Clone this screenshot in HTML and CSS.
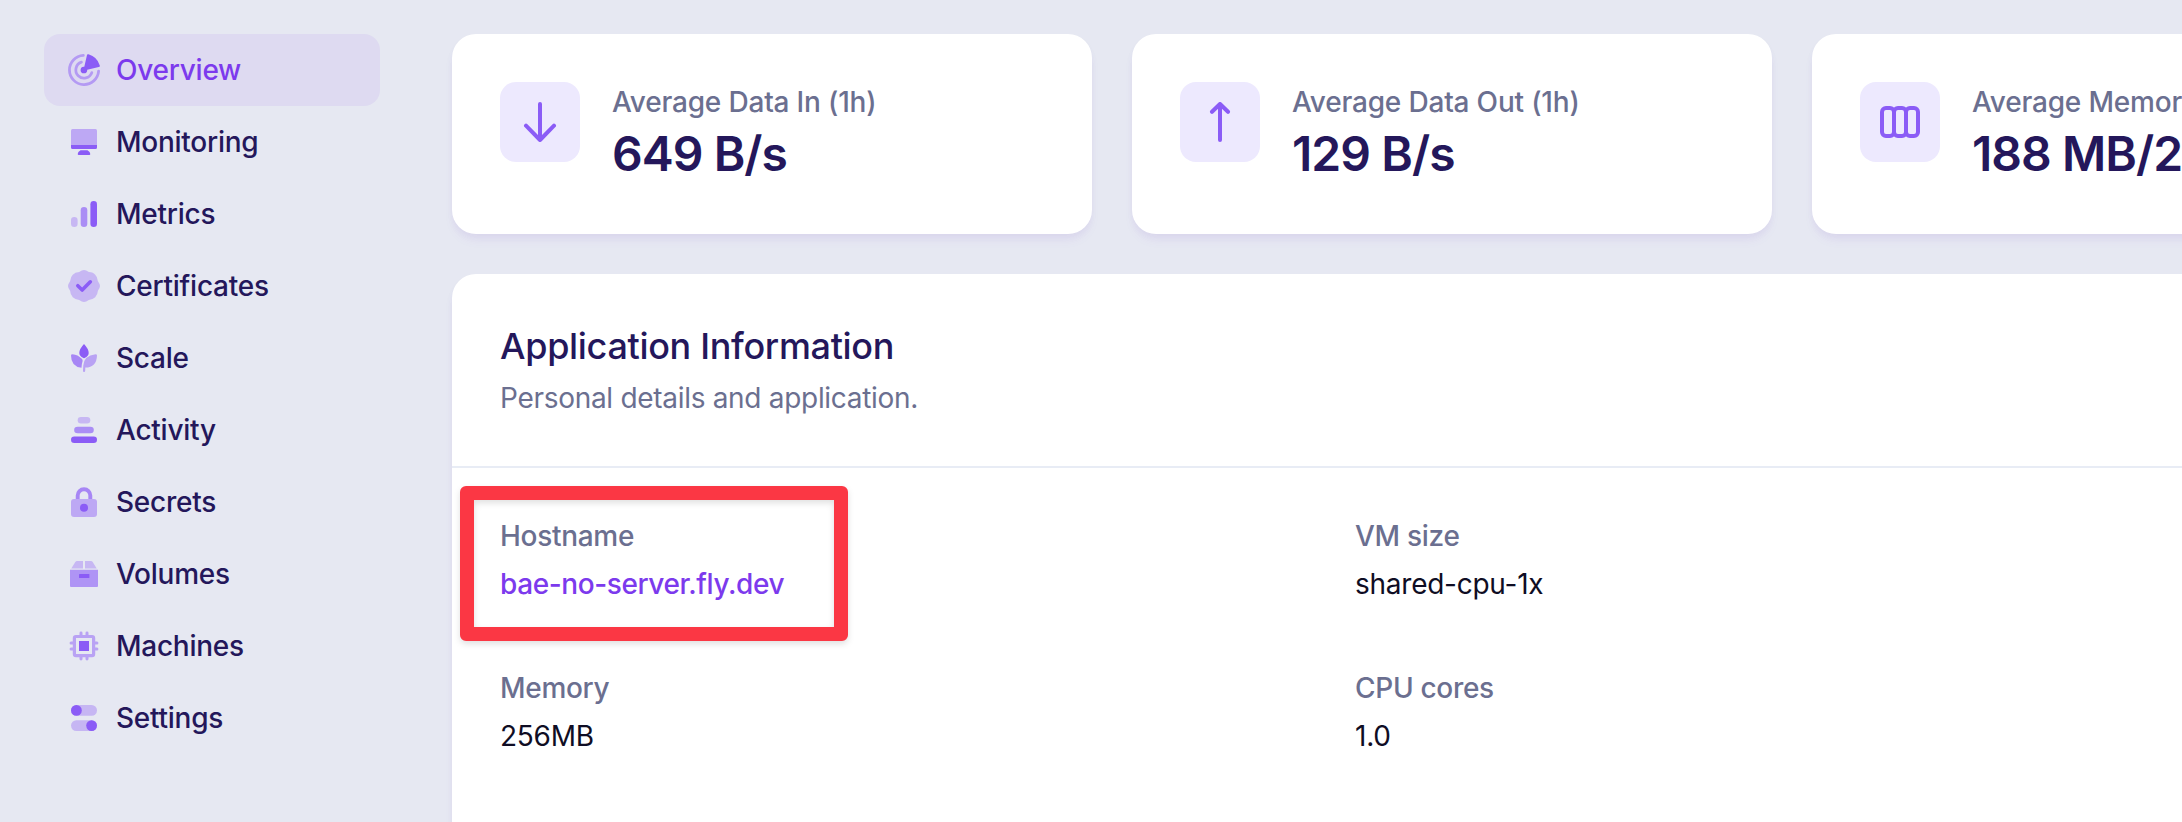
FILE: index.html
```html
<!DOCTYPE html>
<html lang="en">
<head>
<meta charset="utf-8">
<title>Application overview</title>
<link rel="stylesheet" href="styles.css">
</head>
<body>
<div class="layout">
  <nav class="sidebar">
    <a class="nav-item active">
      <svg class="icon" viewBox="0 0 32 32"><g fill="none" stroke="#8b5cf6" stroke-width="2.8" stroke-linecap="round" opacity=".5"><path d="M15.300 1.400A14.600 14.600 0 1 0 30.600 17.200"/><path d="M13.400 8.200A8.200 8.200 0 1 0 23.800 18.600"/></g><path d="M19 1.100Q19.200 -.1 20.500 .3A16.500 16.500 0 0 1 31.800 11.500Q32.100 12.800 30.800 13L19.200 15.800A3.300 3.300 0 1 1 16.300 12.700Z" fill="#8b5cf6"/></svg>
      <span>Overview</span>
    </a>
    <a class="nav-item">
      <svg class="icon" viewBox="0 0 32 32"><path d="M3 19V4.5Q3 3 4.5 3h23Q29 3 29 4.500V19Z" fill="#8b5cf6" opacity=".45"/><path d="M3 19H29V21.500Q29 23 27.500 23H4.500Q3 23 3 21.500ZM12.500 24.300H19.500Q22.300 26 22.300 28Q22.300 29 21.300 29H10.700Q9.700 29 9.700 28Q9.700 26 12.500 24.300Z" fill="#8b5cf6"/></svg>
      <span>Monitoring</span>
    </a>
    <a class="nav-item">
      <svg class="icon" viewBox="0 0 32 32" fill="#8b5cf6"><rect x="3" y="19" width="6.600" height="10" rx="3.300" opacity=".35"/><rect x="12.700" y="9" width="6.600" height="20" rx="3.300" opacity=".65"/><rect x="22.400" y="3" width="6.600" height="26" rx="3.300"/></svg>
      <span>Metrics</span>
    </a>
    <a class="nav-item">
      <svg class="icon" viewBox="0 0 32 32"><path d="M16 0Q18 0 20.800 2Q25.500 2.300 27.200 4.800Q29.600 7 29.900 11.200Q32 14 32 16Q32 18 29.900 20.800Q29.600 25 27.200 27.200Q25 29.600 20.800 29.900Q18 32 16 32Q14 32 11.200 29.900Q7 29.600 4.800 27.200Q2.400 25 2.100 20.800Q0 18 0 16Q0 14 2.100 11.200Q2.400 7 4.800 4.800Q7 2.400 11.200 2.100Q14 0 16 0Z" fill="#8b5cf6" opacity=".35"/><path d="M9.800 15.700L14.200 20L22.300 11.800" fill="none" stroke="#8b5cf6" stroke-width="3.600" stroke-linecap="round" stroke-linejoin="round"/></svg>
      <span>Certificates</span>
    </a>
    <a class="nav-item">
      <svg class="icon" viewBox="0 0 32 32" fill="#8b5cf6"><path d="M16 2Q20.700 7 20.700 11Q20.700 14 16.600 16Q16 16.300 15.400 16Q11.300 14 11.300 11Q11.300 7 16 2Z"/><path d="M3 13.500Q3 12.200 4.500 12.200Q9.800 12.500 13.800 16.800Q14.800 17.800 14.600 19Q13.600 22 13.500 25.800Q3 24.500 3 13.500Z" opacity=".7"/><path d="M29 13.500Q29 12.200 27.500 12.200Q16 13.500 15.300 23.500L15 29Q15 30 16 30Q17.200 30 17.200 28.500L17.300 25.600Q28.500 25.500 29 13.500Z" opacity=".5"/></svg>
      <span>Scale</span>
    </a>
    <a class="nav-item">
      <svg class="icon" viewBox="0 0 32 32" fill="#8b5cf6"><rect x="9.700" y="3" width="12.600" height="6.600" rx="3.300" opacity=".35"/><rect x="6.200" y="12.700" width="19.600" height="6.600" rx="3.300" opacity=".65"/><rect x="3" y="22.400" width="26" height="6.600" rx="3.300"/></svg>
      <span>Activity</span>
    </a>
    <a class="nav-item">
      <svg class="icon" viewBox="0 0 32 32"><path d="M9.700 13V9.500A6.300 6.300 0 0 1 22.300 9.500V13" fill="none" stroke="#8b5cf6" stroke-width="3.900" opacity=".7"/><rect x="3" y="13" width="26" height="18" rx="3" fill="#8b5cf6" opacity=".45"/><circle cx="16" cy="21.800" r="4" fill="#8b5cf6"/></svg>
      <span>Secrets</span>
    </a>
    <a class="nav-item">
      <svg class="icon" viewBox="0 0 32 32" fill="#8b5cf6"><path d="M9 3H15V10.400H3.300L7.300 3.900Q7.900 3 9 3ZM17 3H23Q24.100 3 24.700 3.900L28.700 10.400H17Z" opacity=".35"/><path d="M2 11.700H30V28Q30 29 29 29H3Q2 29 2 28Z" opacity=".6"/><rect x="11" y="16" width="10.400" height="4" rx=".5"/></svg>
      <span>Volumes</span>
    </a>
    <a class="nav-item">
      <svg class="icon" viewBox="0 0 32 32"><g opacity=".5"><path d="M8 5H11.500V3Q11.500 1.600 13 1.600Q14.500 1.600 14.500 3V5H17.500V3Q17.500 1.600 19 1.600Q20.500 1.600 20.500 3V5H24Q27.200 5 27.200 8V11.500H29Q30.400 11.500 30.400 13Q30.400 14.500 29 14.500H27.200V17.500H29Q30.400 17.500 30.400 19Q30.400 20.500 29 20.500H27.200V24Q27.200 27.200 24 27.200H20.500V29Q20.500 30.400 19 30.400Q17.500 30.400 17.500 29V27.200H14.500V29Q14.500 30.400 13 30.400Q11.500 30.400 11.500 29V27.200H8Q4.800 27.200 4.800 24V20.500H3Q1.600 20.500 1.600 19Q1.600 17.500 3 17.500H4.800V14.500H3Q1.600 14.500 1.600 13Q1.600 11.500 3 11.500H4.800V8Q4.800 5 8 5ZM8 8V24H24V8Z" fill="#8b5cf6" fill-rule="evenodd"/></g><rect x="11" y="11" width="10" height="10" fill="#8b5cf6"/></svg>
      <span>Machines</span>
    </a>
    <a class="nav-item">
      <svg class="icon" viewBox="0 0 32 32" fill="#8b5cf6"><g opacity=".35"><rect x="3" y="3" width="26" height="10.800" rx="5.400"/><rect x="3" y="18.200" width="26" height="10.800" rx="5.400"/></g><circle cx="8.400" cy="8.400" r="5.400"/><circle cx="23.600" cy="23.600" r="5.400"/></svg>
      <span>Settings</span>
    </a>
  </nav>

  <main class="content">
    <section class="stats">
      <div class="card stat">
        <div class="stat-icon"><svg class="glyph" viewBox="0 0 40 40"><path d="M20 2V38M6 23.700L20 38L34 23.700"/></svg></div>
        <div><div class="stat-label">Average Data In (1h)</div><div class="stat-value">649 B/s</div></div>
      </div>
      <div class="card stat">
        <div class="stat-icon"><svg class="glyph" viewBox="0 0 40 40"><path d="M20 38V2M12 9.800L20 2L28 9.800"/></svg></div>
        <div><div class="stat-label">Average Data Out (1h)</div><div class="stat-value">129 B/s</div></div>
      </div>
      <div class="card stat">
        <div class="stat-icon"><svg class="glyph" viewBox="0 0 40 40"><rect x="2" y="6" width="12" height="28" rx="4"/><rect x="14" y="6" width="12" height="28" rx="4"/><rect x="26" y="6" width="12" height="28" rx="4"/></svg></div>
        <div><div class="stat-label">Average Memory</div><div class="stat-value">188 MB/2</div></div>
      </div>
    </section>

    <section class="card panel">
      <header class="panel-header">
        <h2 class="panel-title">Application Information</h2>
        <p class="panel-subtitle">Personal details and application.</p>
      </header>
      <dl class="details">
        <div class="detail highlighted"><dt>Hostname</dt><dd class="link">bae-no-server.fly.dev</dd></div>
        <div class="detail"><dt>VM size</dt><dd>shared-cpu-1x</dd></div>
        <div class="detail"><dt>Memory</dt><dd>256MB</dd></div>
        <div class="detail"><dt>CPU cores</dt><dd>1.0</dd></div>
      </dl>
    </section>
  </main>
</div>
</body>
</html>
```
FILE: styles.css
```css
*,
*::after { box-sizing: border-box; }

body {
  margin: 0;
  height: 822px;
  overflow: hidden;
  background: #e6e8f2;
  color: #24175b;
  font-family: Inter, "Liberation Sans", sans-serif;
  font-size: 28px;
  line-height: 40px;
  letter-spacing: -0.25px;
}

.layout {
  display: flex;
  gap: 72px;
  height: 822px;
  padding: 34px 0 0 44px;
  overflow: hidden;
}

.sidebar {
  flex: none;
  width: 336px;
}

.nav-item {
  display: flex;
  align-items: center;
  gap: 16px;
  height: 72px;
  padding: 0 24px;
  border-radius: 16px;
  font-weight: 500;
}

.nav-item.active {
  background: #dedaf1;
  color: #7c3aed;
}

.icon {
  flex: none;
  width: 32px;
  height: 32px;
}

.content {
  flex: none;
  width: 2000px;
}

.stats {
  display: grid;
  grid-template-columns: repeat(3, 640px);
  gap: 40px;
}

.card {
  background: #fff;
  border-radius: 24px;
  box-shadow: 0 8px 12px -2px rgba(109, 40, 217, 0.05), 0 4px 8px -2px rgba(76, 29, 149, 0.06);
}

.stat {
  display: flex;
  gap: 32px;
  height: 200px;
  padding: 48px;
  white-space: nowrap;
}

.stat-icon {
  display: flex;
  flex: none;
  align-items: center;
  justify-content: center;
  width: 80px;
  height: 80px;
  border-radius: 16px;
  background: #ede9fe;
}

.glyph {
  width: 40px;
  height: 40px;
  fill: none;
  stroke: #8b5cf6;
  stroke-width: 4;
  stroke-linecap: round;
  stroke-linejoin: round;
}

.stat-label {
  color: #6b6f90;
  font-weight: 500;
  letter-spacing: -0.18px;
}

.stat-value {
  font-size: 48px;
  font-weight: 600;
  line-height: 64px;
  letter-spacing: -0.95px;
}

.panel {
  height: 700px;
  margin-top: 40px;
}

.panel-header {
  padding: 48px;
  border-bottom: 2px solid #e8ecf5;
}

.panel-title {
  margin: 0;
  font-size: 36px;
  font-weight: 500;
  line-height: 48px;
  letter-spacing: -0.32px;
}

.panel-subtitle {
  margin: 8px 0 0;
  color: #6b6f90;
  letter-spacing: -0.3px;
}

.details {
  display: grid;
  grid-template-columns: 855px 855px;
  row-gap: 64px;
  margin: 0;
  padding: 48px;
}

.detail {
  position: relative;
}

.detail dt {
  color: #6b6f90;
  font-weight: 500;
  letter-spacing: -0.3px;
}

.detail dd {
  margin: 8px 0 0;
  color: #0f0d24;
}

.detail .link {
  color: #7c3aed;
  font-weight: 500;
  letter-spacing: -0.4px;
}

/* Annotation frame laid over the hostname entry */
.highlighted::after {
  content: "";
  position: absolute;
  top: -30.500px;
  left: -40px;
  width: 388px;
  height: 155px;
  border: 14px solid #fb3744;
  border-radius: 6px;
  filter: drop-shadow(0 3px 3px rgba(0, 0, 0, 0.12));
}
```
